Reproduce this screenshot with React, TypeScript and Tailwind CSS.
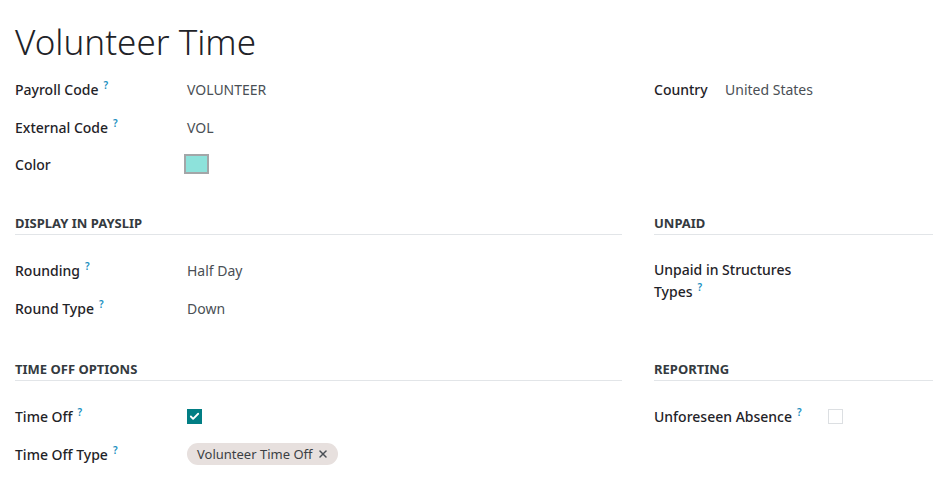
import { X, Check } from 'lucide-react';

const font = { fontFamily: '"Noto Sans", "Open Sans", sans-serif' };

function Help() {
  return <span className="ml-[5px] text-[10px] leading-none font-semibold text-[#1b8fbf] relative -top-[6px]">?</span>;
}

function Row({
  label,
  help,
  labelWidth = 'w-[172px]',
  children,
}: {
  label: string;
  help?: boolean;
  labelWidth?: string;
  children?: React.ReactNode;
}) {
  return (
    <div className="flex items-center h-[38px]">
      <div className={`${labelWidth} shrink-0 text-[14px] font-medium text-[#1f2328]`}>
        {label}
        {help && <Help />}
      </div>
      <div className="text-[14px] text-[#4a4f55]">{children}</div>
    </div>
  );
}

function Heading({ title }: { title: string }) {
  return (
    <div className="border-b border-[#e2e5e8] pb-[1px]">
      <div className="h-[20px] leading-[20px] text-[13px] font-bold uppercase text-[#343a40]">{title}</div>
    </div>
  );
}

export default function App() {
  return (
    <div className="bg-white min-h-screen pl-[15px] pt-[20px] overflow-hidden" style={font}>
      <h1 className="text-[35px] leading-[44px] font-light text-[#1f2328]">Volunteer Time</h1>

      <div className="grid grid-cols-[607px_1fr] gap-x-[32px] mt-[6px]">
        {/* top */}
        <div>
          <Row label="Payroll Code" help>VOLUNTEER</Row>
          <Row label="External Code" help>VOL</Row>
          <div className="flex items-center h-[36px]">
            <div className="w-[169px] shrink-0 text-[14px] font-medium text-[#1f2328]">Color</div>
            <div className="w-[25px] h-[20px] border-2 border-[#a3a6a8] bg-[#8de2db]" />
          </div>
        </div>
        <div>
          <Row label="Country" labelWidth="w-[71px]">United States</Row>
        </div>

        {/* display in payslip / unpaid */}
        <div className="mt-[31px]">
          <Heading title="Display in Payslip" />
          <div className="mt-[16px]">
            <Row label="Rounding" help>Half Day</Row>
            <Row label="Round Type" help>Down</Row>
          </div>
        </div>
        <div className="mt-[31px]">
          <Heading title="Unpaid" />
          <div className="mt-[24px] w-[158px] text-[14px] leading-[22px] font-medium text-[#1f2328]">
            Unpaid in Structures Types
            <Help />
          </div>
        </div>

        {/* time off / reporting */}
        <div className="mt-[32px]">
          <Heading title="Time Off Options" />
          <div className="mt-[16px]">
            <Row label="Time Off" help>
              <div className="w-[15px] h-[15px] bg-[#017e84] flex items-center justify-center">
                <Check className="w-[11px] h-[11px] text-white" strokeWidth={4} />
              </div>
            </Row>
            <Row label="Time Off Type" help>
              <span className="inline-flex items-center gap-[5px] h-[22px] pl-[10px] pr-[9px] rounded-full bg-[#e7e0de] text-[13px] text-[#3b3f44]">
                Volunteer Time Off
                <X className="w-[12px] h-[12px] text-[#4a4f55]" strokeWidth={3} />
              </span>
            </Row>
          </div>
        </div>
        <div className="mt-[32px]">
          <Heading title="Reporting" />
          <div className="mt-[16px]">
            <Row label="Unforeseen Absence" help labelWidth="w-[174px]">
              <div className="w-[15px] h-[15px] border border-[#dcdfe2] bg-white" />
            </Row>
          </div>
        </div>
      </div>
    </div>
  );
}
